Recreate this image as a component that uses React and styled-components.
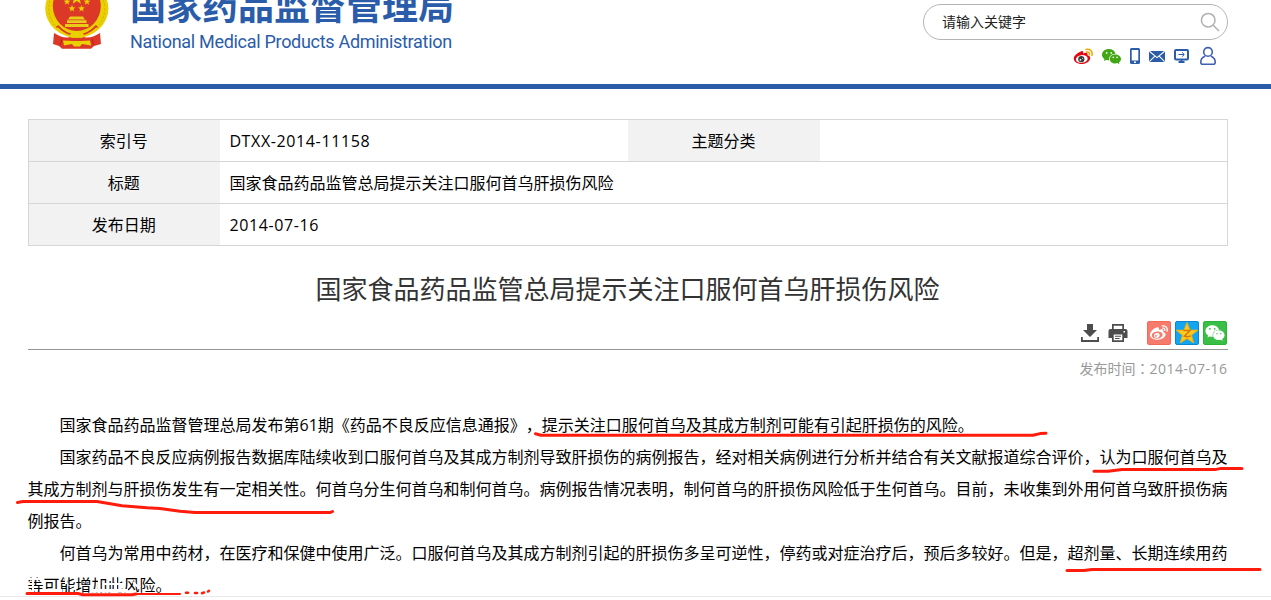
import React from 'react'
import styled, { createGlobalStyle } from 'styled-components'
import { FaWeixin, FaWeibo } from 'react-icons/fa'

const BLUE = '#2a5caa'
const PEN = '#ff1c0c'

const GlobalStyle = createGlobalStyle`
  * {
    box-sizing: border-box;
  }

  body {
    margin: 0;
    background: #fff;
    color: #000;
    font-family: 'Open Sans', 'Noto Sans CJK SC', sans-serif;
    font-size: 16px;
    text-spacing-trim: space-all;
  }
`

const Page = styled.div`
  position: relative;
  width: 1271px;
  height: 600px;
  overflow: hidden;
`

const Header = styled.header`
  display: flex;
  justify-content: space-between;
  height: 89px;
  padding: 0 43px 0 44px;
  border-bottom: 5px solid ${BLUE};
`

const Brand = styled.div`
  display: flex;
  gap: 21px;
`

const BrandText = styled.div`
  color: ${BLUE};
  white-space: nowrap;
`

const BrandName = styled.div`
  margin-top: -22px;
  font-family: 'Noto Sans CJK SC', sans-serif;
  font-size: 36px;
  font-weight: 700;
  line-height: 52px;
`

const BrandSub = styled.div`
  margin-top: 2px;
  font-family: Roboto, sans-serif;
  font-size: 18px;
  line-height: 20px;
  letter-spacing: -0.3px;
`

const Side = styled.div`
  display: flex;
  flex-direction: column;
  align-items: flex-end;
  padding-top: 4px;
`

const Search = styled.div`
  display: flex;
  align-items: center;
  justify-content: space-between;
  width: 305px;
  height: 36px;
  padding: 0 7px 0 18px;
  border: 1px solid #b4b4b4;
  border-radius: 18px;
  color: #222;
  font-size: 14px;
  line-height: 34px;
`

const Links = styled.div`
  display: flex;
  gap: 9px;
  padding: 6px 12px 0 0;

  svg:last-child {
    margin-left: 2px;
  }
`

const Main = styled.main`
  width: 1200px;
  margin: 30px 0 0 27.5px;
`

const Info = styled.table`
  width: 1199px;
  border-collapse: collapse;
  table-layout: fixed;
  border: 1px solid #d6d6d6;
`

const Row = styled.tr`
  height: 42px;
  border-bottom: 1px solid #d6d6d6;
`

const Label = styled.th`
  padding: 0 1px 0 0;
  background: #f2f2f2;
  font-weight: 400;
  line-height: 22px;
`

const Value = styled.td`
  padding: 0 0 0 9.4px;
  line-height: 22px;
`

const Latin = styled.span`
  letter-spacing: ${({ $spacing }) => $spacing || 0}px;
`

const Title = styled.h1`
  margin: 23px 0 0;
  color: #333;
  font-size: 26px;
  font-weight: 400;
  line-height: 40px;
  text-align: center;
`

const Tools = styled.div`
  display: flex;
  justify-content: flex-end;
  align-items: center;
  height: 41px;
  padding: 8px 1px 0 0;
  border-bottom: 1px solid #959595;
`

const ToolIcon = styled.svg`
  width: 20px;
  height: 20px;
  margin-right: ${({ $gap }) => $gap}px;
  fill: #4d4d4d;
`

const Share = styled.span`
  display: flex;
  align-items: center;
  justify-content: center;
  width: 24px;
  height: 24px;
  margin-left: ${({ $first }) => ($first ? 0 : 4)}px;
  border: 1px solid ${({ $edge }) => $edge};
  border-radius: 2px;
  background: ${({ $bg }) => $bg};
  color: #fff;
`

const Published = styled.div`
  height: 20px;
  margin-top: 8px;
  color: #999;
  font-size: 14px;
  line-height: 20px;
  text-align: right;
`

// the TC face centres its colon in the em box
const Colon = styled.span`
  font-family: 'Noto Sans CJK TC', sans-serif;
`

const Article = styled.article`
  padding-top: 31px;
`

const Paragraph = styled.p`
  margin: 0 -4px 0 0;
  line-height: 32px;
  text-indent: 2em;
  line-break: strict;
`

const Marks = styled.svg`
  position: absolute;
  top: 0;
  left: 0;
  pointer-events: none;
`

const PARAGRAPHS = [
  '国家食品药品监督管理总局发布第61期《药品不良反应信息通报》，提示关注口服何首乌及其成方制剂可能有引起肝损伤的风险。',
  '国家药品不良反应病例报告数据库陆续收到口服何首乌及其成方制剂导致肝损伤的病例报告，经对相关病例进行分析并结合有关文献报道综合评价，认为口服何首乌及其成方制剂与肝损伤发生有一定相关性。何首乌分生何首乌和制何首乌。病例报告情况表明，制何首乌的肝损伤风险低于生何首乌。目前，未收集到外用何首乌致肝损伤病例报告。',
  '何首乌为常用中药材，在医疗和保健中使用广泛。口服何首乌及其成方制剂引起的肝损伤多呈可逆性，停药或对症治疗后，预后多较好。但是，超剂量、长期连续用药等可能增加此风险。',
]

const star = (cx, cy, r) =>
  Array.from({ length: 10 }, (_, i) => {
    const a = (Math.PI / 5) * i - Math.PI / 2
    const k = i % 2 ? r * 0.42 : r
    return `${(cx + k * Math.cos(a)).toFixed(2)},${(cy + k * Math.sin(a)).toFixed(2)}`
  }).join(' ')

const Emblem = () => (
  <svg width="65" height="50" viewBox="44 0 65 50">
    <ellipse cx="76.8" cy="8.5" rx="31.6" ry="29" fill="#ead000" />
    <ellipse
      cx="76.8"
      cy="8.5"
      rx="28"
      ry="27"
      fill="none"
      stroke="#d2a900"
      strokeWidth="1"
      strokeDasharray="2 2"
    />
    <ellipse cx="76.8" cy="6" rx="24" ry="25" fill="#dc3828" />
    <path
      d="M54 33 Q64 39 70 37 Q77 34 84 37 Q90 39 100 33 L101 44 L94 46 L91 48.7 H62 L59 46 L53 44Z"
      fill="#dc3828"
    />
    <path d="M57 26 Q66 36 76.8 36 Q88 36 97 26" fill="none" stroke="#dc3828" strokeWidth="3" />
    <path d="M57 28 Q66 37 76.8 37 Q88 37 97 28" fill="none" stroke="#ead000" strokeWidth="2" />
    <path d="M69 36 L72 32.5 L76.8 31 L82 32.5 L85 36 L81 38 L77 36.5 L72 38Z" fill="#ead000" />
    <path d="M70 16.5 H83 L85 19.5 H68Z M67 20.3 H86.5 V23 H67Z M65 24 H88.5 V27 H65Z" fill="#e8cc17" />
    <path d="M73 41 L81 41 L90 40.5 L91 45.5 L82 44 L80 46.5 L74 46.5 L72 44 L64 45.5 L63 40.5Z" fill="#ead000" />
    <path d="M60 45 L62 39 M94 45 L92 39" stroke="#b91e18" strokeWidth="1" />
    <polygon points={star(76.8, -2, 7)} fill="#ead000" />
    <polygon points={star(67, 1.8, 3.6)} fill="#ead000" />
    <polygon points={star(87, 1.8, 3.6)} fill="#ead000" />
    <polygon points={star(72, 8.5, 3.6)} fill="#ead000" />
    <polygon points={star(81.5, 8.5, 3.6)} fill="#ead000" />
  </svg>
)

const SearchIcon = () => (
  <svg width="20" height="20" viewBox="0 0 20 20" fill="none" stroke="#b0b0b0" strokeWidth="1.5">
    <circle cx="8.2" cy="8.2" r="6.8" />
    <path d="M13.2 13.2 L19 19" />
  </svg>
)

const WeiboColor = () => (
  <svg width="20" height="20" viewBox="0 0 20 20">
    <path
      d="M8 5.4 C9.5 4.7 10.5 5.2 10.3 7.4 C12.5 6.5 15 6.4 14.5 9.2 C16.5 9.7 17.8 11 17 13.2 C15.7 16.8 11 18.5 7 17.9 C2.9 17.3 .3 14.6 .9 11.8 C1.5 9 5.1 6.3 8 5.4Z"
      fill="#e30613"
    />
    <ellipse cx="8.8" cy="13" rx="5.9" ry="3.9" transform="rotate(-8 8.8 13)" fill="#fff" />
    <circle cx="8.3" cy="13.2" r="3.1" fill="#3a3a3a" />
    <circle cx="7.4" cy="13.8" r=".9" fill="#fff" />
    <circle cx="9.5" cy="12.3" r=".5" fill="#fff" />
    <path
      d="M13 3.4 C17 2.5 20 5.2 18.9 9.2 M13.4 6 C15.5 5.6 16.9 6.8 16.3 8.8"
      fill="none"
      stroke="#f0a500"
      strokeWidth="1.5"
      strokeLinecap="round"
    />
  </svg>
)

const WechatGreen = () => (
  <svg width="19" height="20" viewBox="0 0 19 20" fill="#43a713">
    <path d="M7 3 C3 3 0 5.4 0 8.7 C0 10.6 1 12 2.5 13 L1.9 15.1 L4.4 13.9 C5.3 14.2 6.2 14.3 7.3 14.3 C6.3 10.8 9.3 7.8 13.5 7.7 C12.8 4.9 10.2 3 7 3Z" />
    <path d="M13.2 8.4 C9.9 8.4 7.8 10.4 7.8 12.9 C7.8 15.6 10.2 17.5 13.2 17.5 C14 17.5 14.7 17.4 15.3 17.1 L17.4 18.2 L16.9 16.4 C18.2 15.5 19 14.4 19 12.9 C19 10.3 16.4 8.4 13.2 8.4Z" />
    <g fill="#fff">
      <circle cx="4.7" cy="6.9" r=".9" />
      <circle cx="9.3" cy="6.9" r=".9" />
      <circle cx="11.3" cy="11.4" r=".8" />
      <circle cx="15" cy="11.4" r=".8" />
    </g>
  </svg>
)

const Phone = () => (
  <svg width="10" height="20" viewBox="0 0 10 20">
    <path
      fillRule="evenodd"
      d="M1.5 2 H8.5 Q10 2 10 3.5 V16.5 Q10 18 8.5 18 H1.5 Q0 18 0 16.5 V3.5 Q0 2 1.5 2Z M1.7 4 V14.5 H8.3 V4Z M4 15.5 V17 H6 V15.5Z"
      fill={BLUE}
    />
  </svg>
)

const Mail = () => (
  <svg width="16" height="20" viewBox="0 0 16 20">
    <rect y="5" width="16" height="11" fill={BLUE} />
    <path
      d="M.3 5.3 L8 11.6 L15.7 5.3 M.3 15.7 L5.6 10.4 M15.7 15.7 L10.4 10.4"
      fill="none"
      stroke="#fff"
      strokeWidth="1.1"
    />
  </svg>
)

const Screen = () => (
  <svg width="15" height="20" viewBox="0 0 15 20" fill="none" stroke={BLUE}>
    <rect x="1" y="4" width="13" height="9.5" rx="1" strokeWidth="2" />
    <path d="M4.5 8.5 H10 M8 6.3 L10.3 8.5 L8 10.7" strokeWidth="1" />
    <path d="M7.5 13.5 V16 M4.5 16 H10.5" strokeWidth="2" />
  </svg>
)

const User = () => (
  <svg width="16" height="20" viewBox="0 0 16 20" fill="none" stroke="#3f5fb0" strokeWidth="1.6">
    <circle cx="8" cy="5.9" r="4.3" />
    <path d="M5.2 10.3 C2.5 11.2 .8 13.4 .8 16.2 Q.8 18.2 2.6 18.2 H13.4 Q15.2 18.2 15.2 16.2 C15.2 13.4 13.5 11.2 10.8 10.3" />
  </svg>
)

const QzoneStar = () => (
  <svg width="22" height="22" viewBox="0 0 22 22">
    <polygon
      points={star(11, 11.7, 10.8)}
      fill="#ffcb20"
      stroke="#ffb400"
      strokeWidth="1.2"
      strokeLinejoin="round"
    />
    <path d="M7.5 8.5 H14 L8.5 14.2 Q12 15.2 15 13.9" fill="none" stroke="#d4780d" strokeWidth="1.5" />
  </svg>
)

const App = () => {
  return (
    <>
      <GlobalStyle />
      <Page>
        <Header>
          <Brand>
            <Emblem />
            <BrandText>
              <BrandName>国家药品监督管理局</BrandName>
              <BrandSub>National Medical Products Administration</BrandSub>
            </BrandText>
          </Brand>
          <Side>
            <Search>
              <span>请输入关键字</span>
              <SearchIcon />
            </Search>
            <Links>
              <WeiboColor />
              <WechatGreen />
              <Phone />
              <Mail />
              <Screen />
              <User />
            </Links>
          </Side>
        </Header>
        <Main>
          <Info>
            <colgroup>
              <col width="192" />
              <col width="408" />
              <col width="192" />
              <col width="407" />
            </colgroup>
            <tbody>
              <Row>
                <Label>索引号</Label>
                <Value>
                  <Latin $spacing={0.62}>DTXX-2014-11158</Latin>
                </Value>
                <Label>主题分类</Label>
                <Value />
              </Row>
              <Row>
                <Label>标题</Label>
                <Value colSpan="3">国家食品药品监管总局提示关注口服何首乌肝损伤风险</Value>
              </Row>
              <Row>
                <Label>发布日期</Label>
                <Value colSpan="3">
                  <Latin $spacing={0.6}>2014-07-16</Latin>
                </Value>
              </Row>
            </tbody>
          </Info>
          <Title>国家食品药品监管总局提示关注口服何首乌肝损伤风险</Title>
          <Tools>
            <ToolIcon $gap={8} viewBox="0 0 20 20">
              <path d="M7 1 H13 V7 H17 L10 14 L3 7 H7Z M1 14 H2.8 V17 H17.2 V14 H19 V19 H1Z" />
            </ToolIcon>
            <ToolIcon $gap={19} viewBox="0 0 20 20">
              <path
                fillRule="evenodd"
                d="M4 1 H16 V6 H17.5 Q19.5 6 19.5 8 V15 H16 V19 H4 V15 H.5 V8 Q.5 6 2.5 6 H4Z M5.7 2.7 V6 H14.3 V2.7Z M5.7 11.5 V17.3 H14.3 V11.5Z M15.5 8 V9.5 H17 V8Z M7 12.7 H13 V13.8 H7Z M7 15 H11.5 V16.1 H7Z"
              />
            </ToolIcon>
            <Share $first $bg="#f67b6c" $edge="#f4695a">
              <FaWeibo size={18} />
            </Share>
            <Share $bg="#12a5f4" $edge="#0b86cf">
              <QzoneStar />
            </Share>
            <Share $bg="#39bf45" $edge="#2bb038">
              <FaWeixin size={20} />
            </Share>
          </Tools>
          <Published>
            发布时间<Colon>：</Colon>
            <Latin $spacing={0.5}>2014-07-16</Latin>
          </Published>
          <Article>
            {PARAGRAPHS.map(text => (
              <Paragraph key={text}>{text}</Paragraph>
            ))}
          </Article>
        </Main>
        <Marks width="1271" height="600" viewBox="0 0 1271 600" fill="none">
          <path d="M0 596.5 H1271" stroke="#e9e9e9" />
          {/* eraser */}
          <g stroke="#fff" strokeWidth="2">
            <path d="M26 579 H43 M27 587 H36 M33 575 V592 M66 576 V584 M99 579 V592 M104 584 H122 M116 577 V592 M133 582 L139 588" />
            <path d="M43 590.5 H62 M90 590.5 H128" strokeWidth="3" />
          </g>
          <g stroke={PEN} strokeWidth="3" strokeLinecap="round" strokeLinejoin="round">
            <path d="M535.5 433.8 L541 435.2 H1033 L1040 433.6 L1046 433.3" />
            <path d="M1094 471.3 H1108 L1122 469.6 H1215 L1221 468.4 H1242" />
            <path d="M17.5 502.5 L23 501.6 H97 L122 505.7 L147 507.8 L160 508.6 L180 511.2 L195 512.6 H330 L332.5 511.5" />
            <path d="M1067 570.6 H1084 L1092 569.4 H1260" />
            <path d="M27 593.5 H78 L83 594.8 H132 L136 594" />
            <path d="M136 594 H180" strokeWidth="2" />
            <path d="M186 592.8 H188 M195 593 H197 M202 593.2 L204 592.6 M208 591.5 L209 590.8" strokeWidth="2.6" />
          </g>
        </Marks>
      </Page>
    </>
  )
}

export default App
